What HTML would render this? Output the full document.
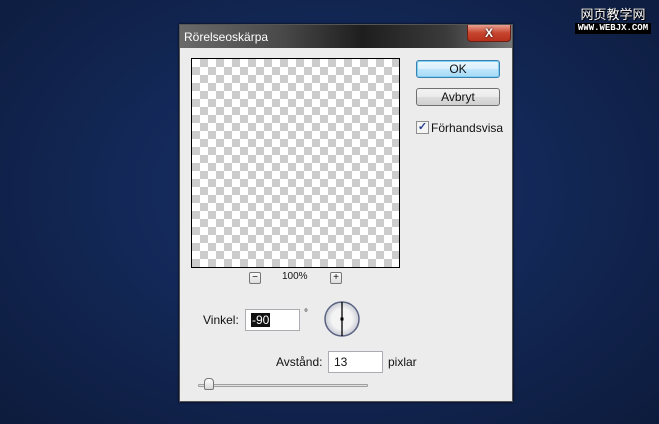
<!DOCTYPE html>
<html><head><meta charset="utf-8"><style>
*{margin:0;padding:0;box-sizing:border-box}
body{width:659px;height:424px;overflow:hidden;position:relative;font-family:"Liberation Sans",sans-serif;font-size:12px;color:#111;
background:radial-gradient(ellipse at 50% 45%,#1a3165 0%,#132857 45%,#0d1b3c 100%)}
.wm{position:absolute;left:575px;top:6px;width:76px;text-align:center;color:#fff;font-family:"WenQuanYi Zen Hei","Noto Sans CJK SC",sans-serif;font-size:13px;line-height:15px;white-space:nowrap;text-shadow:0 0 1px #000,1px 1px 0 #000}
.wm .b{font-family:"Liberation Mono",monospace;font-size:9px;font-weight:bold;line-height:11px;background:#000;margin-top:2px}
.dlg{position:absolute;left:179px;top:24px;width:334px;height:378px;background:#ececec;border:1px solid #555;box-shadow:0 0 2px #000}
.title{position:absolute;left:0;top:0;width:332px;height:23px;background:linear-gradient(90deg,#6a6a6a 0%,#4a4a4a 30%,#1e1e1e 55%,#3a3a3a 80%,#777 100%);color:#fff;padding:5px 0 0 4px;font-size:12px}
.close{position:absolute;left:287px;top:0;width:44px;height:17px;border:1px solid #6b1e14;border-top:none;border-radius:0 0 4px 4px;background:linear-gradient(#e8a092,#c7442e 50%,#b8301c);color:#fff;font-weight:bold;text-align:center;font-size:12px;line-height:16px;text-shadow:0 0 2px #000}
.prev{position:absolute;left:11px;top:33px;width:209px;height:210px;border:1px solid #000;
background-color:#fff;background-image:linear-gradient(45deg,#ccc 25%,transparent 25%,transparent 75%,#ccc 75%),linear-gradient(45deg,#ccc 25%,transparent 25%,transparent 75%,#ccc 75%);background-size:16px 16px;background-position:0 0,8px 8px}
.btn{position:absolute;left:236px;width:84px;height:18px;border:1px solid #707070;border-radius:3px;background:linear-gradient(#f2f2f2,#ebebeb 50%,#dddddd 51%,#cfcfcf);text-align:center;line-height:16px;font-size:12px}
.ok{top:35px;border-color:#3c7fb1;box-shadow:inset 0 0 0 1px #7fd0f5;background:linear-gradient(#eaf6fd,#d9f0fc 50%,#bee6fd 51%,#a7d9f5)}
.cb{position:absolute;left:236px;top:96px;width:13px;height:13px;border:1px solid #8f8f8f;background:#f4f4f4;font-size:11px;line-height:11px;text-align:center;color:#2a3f8f;font-weight:bold}
.sq{position:absolute;top:247px;width:12px;height:12px;border:1px solid #777;border-radius:2px;background:linear-gradient(#fafafa,#ddd);font-size:10px;line-height:9px;text-align:center}
.t{position:absolute;white-space:nowrap}
.inp{position:absolute;background:#fff;border:1px solid #abadb3;height:22px}
</style></head><body>
<div class="wm">网页教学网<div class="b">WWW.WEBJX.COM</div></div>
<div class="dlg">
<div class="title">Rörelseoskärpa</div>
<div class="close">X</div>
<div class="prev"></div>
<div class="btn ok">OK</div>
<div class="btn" style="top:63px">Avbryt</div>
<div class="cb">✓</div>
<div class="t" style="left:251px;top:96px">Förhandsvisa</div>
<div class="sq" style="left:69px">−</div>
<div class="t" style="left:102px;top:246px;font-size:10px">100%</div>
<div class="sq" style="left:150px">+</div>
<div class="t" style="left:23px;top:288px">Vinkel:</div>
<div class="inp" style="left:65px;top:284px;width:55px"><span style="position:absolute;left:5px;top:3px;background:#111;color:#fff;padding:0 1px;line-height:14px">-90</span></div>
<div class="t" style="left:124px;top:283px;font-size:10px">°</div>
<svg style="position:absolute;left:143px;top:275px" width="38" height="38" viewBox="0 0 38 38">
<defs><radialGradient id="g" cx="50%" cy="50%" r="50%"><stop offset="60%" stop-color="#f4f4f4"/><stop offset="100%" stop-color="#c9cbd4"/></radialGradient></defs>
<circle cx="19" cy="19" r="17" fill="url(#g)" stroke="#5b6382" stroke-width="1.5"/>
<line x1="19" y1="2" x2="19" y2="36" stroke="#000" stroke-width="1.3"/>
<rect x="17.5" y="17.5" width="3" height="3" fill="#000"/>
</svg>
<div class="t" style="left:96px;top:330px">Avstånd:</div>
<div class="inp" style="left:148px;top:326px;width:55px"><span style="position:absolute;left:5px;top:3px">13</span></div>
<div class="t" style="left:208px;top:330px">pixlar</div>
<div style="position:absolute;left:18px;top:359px;width:170px;height:3px;border:1px solid #a0a0a0;background:#e0e0e0;border-radius:1px"></div>
<div style="position:absolute;left:24px;top:353px;width:10px;height:12px;border:1px solid #777;border-radius:4px 4px 2px 2px;background:linear-gradient(#fff,#d8d8d8)"></div>
</div>
</body></html>
